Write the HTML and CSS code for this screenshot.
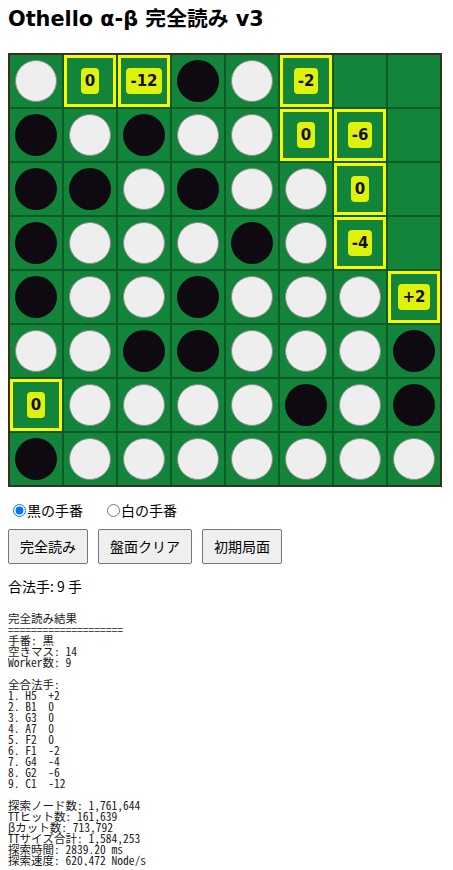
FILE: index.html
```html
<!DOCTYPE html>
<html lang="ja">
<head>
<meta charset="utf-8">
<title>Othello α-β 完全読み v3</title>
<link rel="stylesheet" href="styles.css">
</head>
<body>
<h1 class="title">Othello α-β 完全読み v3</h1>
<div class="board">
  <div class="cell"><span class="stone white"></span></div>
  <div class="cell cand"><span class="badge">0</span></div>
  <div class="cell cand"><span class="badge">-12</span></div>
  <div class="cell"><span class="stone black"></span></div>
  <div class="cell"><span class="stone white"></span></div>
  <div class="cell cand"><span class="badge">-2</span></div>
  <div class="cell"></div>
  <div class="cell"></div>

  <div class="cell"><span class="stone black"></span></div>
  <div class="cell"><span class="stone white"></span></div>
  <div class="cell"><span class="stone black"></span></div>
  <div class="cell"><span class="stone white"></span></div>
  <div class="cell"><span class="stone white"></span></div>
  <div class="cell cand"><span class="badge">0</span></div>
  <div class="cell cand"><span class="badge">-6</span></div>
  <div class="cell"></div>

  <div class="cell"><span class="stone black"></span></div>
  <div class="cell"><span class="stone black"></span></div>
  <div class="cell"><span class="stone white"></span></div>
  <div class="cell"><span class="stone black"></span></div>
  <div class="cell"><span class="stone white"></span></div>
  <div class="cell"><span class="stone white"></span></div>
  <div class="cell cand"><span class="badge">0</span></div>
  <div class="cell"></div>

  <div class="cell"><span class="stone black"></span></div>
  <div class="cell"><span class="stone white"></span></div>
  <div class="cell"><span class="stone white"></span></div>
  <div class="cell"><span class="stone white"></span></div>
  <div class="cell"><span class="stone black"></span></div>
  <div class="cell"><span class="stone white"></span></div>
  <div class="cell cand"><span class="badge">-4</span></div>
  <div class="cell"></div>

  <div class="cell"><span class="stone black"></span></div>
  <div class="cell"><span class="stone white"></span></div>
  <div class="cell"><span class="stone white"></span></div>
  <div class="cell"><span class="stone black"></span></div>
  <div class="cell"><span class="stone white"></span></div>
  <div class="cell"><span class="stone white"></span></div>
  <div class="cell"><span class="stone white"></span></div>
  <div class="cell cand"><span class="badge">+2</span></div>

  <div class="cell"><span class="stone white"></span></div>
  <div class="cell"><span class="stone white"></span></div>
  <div class="cell"><span class="stone black"></span></div>
  <div class="cell"><span class="stone black"></span></div>
  <div class="cell"><span class="stone white"></span></div>
  <div class="cell"><span class="stone white"></span></div>
  <div class="cell"><span class="stone white"></span></div>
  <div class="cell"><span class="stone black"></span></div>

  <div class="cell cand"><span class="badge">0</span></div>
  <div class="cell"><span class="stone white"></span></div>
  <div class="cell"><span class="stone white"></span></div>
  <div class="cell"><span class="stone white"></span></div>
  <div class="cell"><span class="stone white"></span></div>
  <div class="cell"><span class="stone black"></span></div>
  <div class="cell"><span class="stone white"></span></div>
  <div class="cell"><span class="stone black"></span></div>

  <div class="cell"><span class="stone black"></span></div>
  <div class="cell"><span class="stone white"></span></div>
  <div class="cell"><span class="stone white"></span></div>
  <div class="cell"><span class="stone white"></span></div>
  <div class="cell"><span class="stone white"></span></div>
  <div class="cell"><span class="stone white"></span></div>
  <div class="cell"><span class="stone white"></span></div>
  <div class="cell"><span class="stone white"></span></div>
</div>

<div class="turns">
  <label class="turn"><input type="radio" name="turn" checked>黒の手番</label>
  <label class="turn"><input type="radio" name="turn">白の手番</label>
</div>

<div class="buttons">
  <button class="btn">完全読み</button>
  <button class="btn">盤面クリア</button>
  <button class="btn">初期局面</button>
</div>

<div class="legal">合法手: 9 手</div>

<pre class="result">完全読み結果
====================
手番: 黒
空きマス: 14
Worker数: 9

全合法手:
1. H5  +2
2. B1  0
3. G3  0
4. A7  0
5. F2  0
6. F1  -2
7. G4  -4
8. G2  -6
9. C1  -12

探索ノード数: 1,761,644
TTヒット数: 161,639
βカット数: 713,792
TTサイズ合計: 1,584,253
探索時間: 2839.20 ms
探索速度: 620,472 Node/s</pre>
</body>
</html>
```

FILE: styles.css
```css
body {
  margin: 8px;
  font-family: "Noto Sans CJK JP", "Noto Sans", sans-serif;
  font-size: 14px;
  color: #000;
  background: #fff;
}

.title {
  font-family: "DejaVu Sans", "Noto Sans CJK JP", sans-serif;
  font-size: 20.8px;
  font-weight: bold;
  line-height: 22px;
  margin: 0 0 23px 0;
}

.board {
  display: grid;
  grid-template-columns: repeat(8, 52px);
  grid-auto-rows: 52px;
  gap: 2px;
  width: fit-content;
  background: #0c5a28;
  border: 2px solid #3a2e1f;
}

.cell {
  background: #13853a;
  display: flex;
  align-items: center;
  justify-content: center;
  box-sizing: border-box;
}

.cell.cand {
  border: 3px solid #f8f800;
}

.stone {
  width: 42px;
  height: 42px;
  border-radius: 50%;
  box-sizing: border-box;
}

.stone.white {
  background: #eeeeee;
  border: 1px solid #8a8a8a;
}

.stone.black {
  background: #0f0a11;
}

.badge {
  background: #dff20a;
  color: #111;
  font-family: "DejaVu Sans", sans-serif;
  font-weight: bold;
  font-size: 15px;
  line-height: 18px;
  padding: 4px 4px;
  border-radius: 4px;
}

.turns {
  display: flex;
  gap: 19px;
  margin-top: 13px;
  line-height: 20px;
}

.turn {
  display: inline-flex;
  align-items: center;
}

.turn input {
  margin: 0 1px 0 5px;
  width: 13px;
  height: 13px;
}

.buttons {
  display: flex;
  gap: 10px;
  margin-top: 9px;
}

.btn {
  font-family: "Noto Sans CJK JP", sans-serif;
  font-size: 14px;
  line-height: 20px;
  padding: 6px 11px 7px;
  background: #efefef;
  border: 1px solid #767676;
  border-radius: 2px;
  color: #000;
}

.legal {
  margin-top: 12px;
  line-height: 20px;
}

.result {
  font-family: "Noto Sans Mono CJK JP", "Liberation Mono", monospace;
  font-size: 11.5px;
  line-height: 11px;
  margin: 17px 0 0 0;
  color: #1a1a1a;
}
```
